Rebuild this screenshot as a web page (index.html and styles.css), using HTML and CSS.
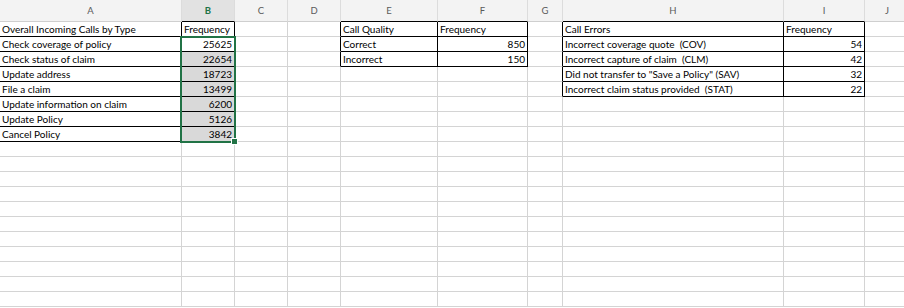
FILE: index.html
```html
<!DOCTYPE html>
<html>
<head>
<meta charset="utf-8">
<link rel="stylesheet" href="styles.css">
</head>
<body>
<div class="sheet">
  <div class="h">A</div><div class="h hs bb">B</div><div class="h">C</div><div class="h">D</div><div class="h bb">E</div><div class="h bb">F</div><div class="h">G</div><div class="h bb">H</div><div class="h bb">I</div><div class="h">J</div>

  <div class="c bb br">Overall Incoming Calls by Type</div><div class="c bb br">Frequency</div><div class="c"></div><div class="c br"></div><div class="c bb br">Call Quality</div><div class="c bb br">Frequency</div><div class="c br"></div><div class="c bb br">Call Errors</div><div class="c bb br">Frequency</div><div class="c"></div>

  <div class="c bb br">Check coverage of policy</div><div class="c n bb br">25625</div><div class="c"></div><div class="c br"></div><div class="c bb br">Correct</div><div class="c n bb br">850</div><div class="c br"></div><div class="c bb br">Incorrect coverage quote&nbsp; (COV)</div><div class="c n bb br">54</div><div class="c"></div>

  <div class="c bb br">Check status of claim</div><div class="c n bb br sel">22654</div><div class="c"></div><div class="c br"></div><div class="c bb br">Incorrect</div><div class="c n bb br">150</div><div class="c br"></div><div class="c bb br">Incorrect capture of claim&nbsp; (CLM)</div><div class="c n bb br">42</div><div class="c"></div>

  <div class="c bb br">Update address</div><div class="c n bb br sel">18723</div><div class="c"></div><div class="c"></div><div class="c"></div><div class="c"></div><div class="c br"></div><div class="c bb br">Did not transfer to "Save a Policy" (SAV)</div><div class="c n bb br">32</div><div class="c"></div>

  <div class="c bb br">File a claim</div><div class="c n bb br sel">13499</div><div class="c"></div><div class="c"></div><div class="c"></div><div class="c"></div><div class="c br"></div><div class="c bb br">Incorrect claim status provided&nbsp; (STAT)</div><div class="c n bb br">22</div><div class="c"></div>

  <div class="c bb br">Update information on claim</div><div class="c n bb br sel">6200</div><div class="c"></div><div class="c"></div><div class="c"></div><div class="c"></div><div class="c"></div><div class="c"></div><div class="c"></div><div class="c"></div>

  <div class="c bb br">Update Policy</div><div class="c n bb br sel">5126</div><div class="c"></div><div class="c"></div><div class="c"></div><div class="c"></div><div class="c"></div><div class="c"></div><div class="c"></div><div class="c"></div>

  <div class="c bb br">Cancel Policy</div><div class="c n bb br sel">3842</div><div class="c"></div><div class="c"></div><div class="c"></div><div class="c"></div><div class="c"></div><div class="c"></div><div class="c"></div><div class="c"></div>

  <div class="c"></div><div class="c"></div><div class="c"></div><div class="c"></div><div class="c"></div><div class="c"></div><div class="c"></div><div class="c"></div><div class="c"></div><div class="c"></div>
  <div class="c"></div><div class="c"></div><div class="c"></div><div class="c"></div><div class="c"></div><div class="c"></div><div class="c"></div><div class="c"></div><div class="c"></div><div class="c"></div>
  <div class="c"></div><div class="c"></div><div class="c"></div><div class="c"></div><div class="c"></div><div class="c"></div><div class="c"></div><div class="c"></div><div class="c"></div><div class="c"></div>
  <div class="c"></div><div class="c"></div><div class="c"></div><div class="c"></div><div class="c"></div><div class="c"></div><div class="c"></div><div class="c"></div><div class="c"></div><div class="c"></div>
  <div class="c"></div><div class="c"></div><div class="c"></div><div class="c"></div><div class="c"></div><div class="c"></div><div class="c"></div><div class="c"></div><div class="c"></div><div class="c"></div>
  <div class="c"></div><div class="c"></div><div class="c"></div><div class="c"></div><div class="c"></div><div class="c"></div><div class="c"></div><div class="c"></div><div class="c"></div><div class="c"></div>
  <div class="c"></div><div class="c"></div><div class="c"></div><div class="c"></div><div class="c"></div><div class="c"></div><div class="c"></div><div class="c"></div><div class="c"></div><div class="c"></div>
  <div class="c"></div><div class="c"></div><div class="c"></div><div class="c"></div><div class="c"></div><div class="c"></div><div class="c"></div><div class="c"></div><div class="c"></div><div class="c"></div>
  <div class="c"></div><div class="c"></div><div class="c"></div><div class="c"></div><div class="c"></div><div class="c"></div><div class="c"></div><div class="c"></div><div class="c"></div><div class="c"></div>
  <div class="c"></div><div class="c"></div><div class="c"></div><div class="c"></div><div class="c"></div><div class="c"></div><div class="c"></div><div class="c"></div><div class="c"></div><div class="c"></div>
  <div class="c"></div><div class="c"></div><div class="c"></div><div class="c"></div><div class="c"></div><div class="c"></div><div class="c"></div><div class="c"></div><div class="c"></div><div class="c"></div>

  <div class="selection"><span class="handle"></span></div>
</div>
</body>
</html>
```

FILE: styles.css
```css
html, body {
  margin: 0;
  padding: 0;
  background: #ffffff;
  overflow: hidden;
}

.sheet {
  position: relative;
  display: grid;
  grid-template-columns: 182px 53px 53px 53px 97px 90px 35px 221px 81px 45px;
  grid-template-rows: 22px;
  grid-auto-rows: 15px;
  width: 910px;
  font-family: "Lato", "Liberation Sans", sans-serif;
  font-size: 10px;
  color: #000000;
}

.h {
  box-sizing: border-box;
  background: #f3f3f3;
  border-right: 1px solid #dcdcdc;
  border-bottom: 1px solid #cfcfcf;
  color: #5a5a5a;
  font-family: "Lato", "Liberation Sans", sans-serif;
  font-size: 9.5px;
  text-align: center;
  line-height: 21px;
}

.h.hs {
  background: #e2e2e2;
  color: #217346;
  font-weight: 700;
}

.c {
  box-sizing: border-box;
  border-right: 1px solid #d4d4d4;
  border-bottom: 1px solid #d4d4d4;
  padding: 0 2px;
  line-height: 15px;
  white-space: nowrap;
  overflow: hidden;
}

.n {
  text-align: right;
}

.sel {
  background: #d9d9d9;
}

.bb {
  border-bottom-color: #000000;
}

.br {
  border-right-color: #000000;
}

.selection {
  position: absolute;
  grid-column: 2 / 3;
  grid-row: 3 / 10;
  top: -1px;
  right: -1px;
  bottom: -1px;
  left: -2px;
  border: 2px solid #217346;
  pointer-events: none;
}

.handle {
  position: absolute;
  right: -4px;
  bottom: -4px;
  width: 5px;
  height: 5px;
  background: #217346;
  border: 1px solid #ffffff;
}
```
